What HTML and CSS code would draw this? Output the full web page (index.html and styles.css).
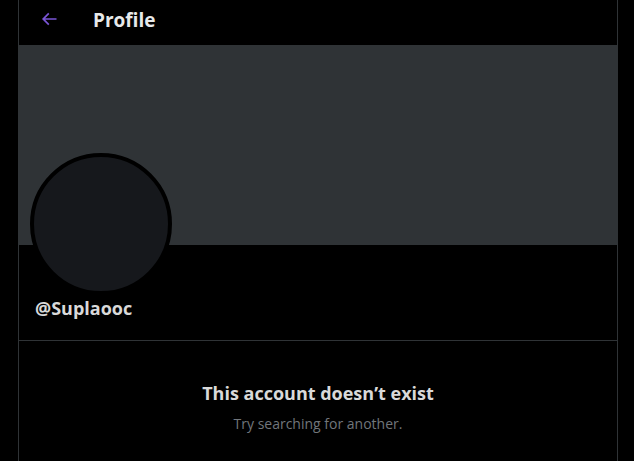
FILE: index.html
```html
<!DOCTYPE html>
<html>
<head>
<meta charset="utf-8">
<link rel="stylesheet" href="styles.css">
</head>
<body>
<div class="column">
  <header class="topbar">
    <span class="back">
      <svg width="20" height="20" viewBox="0 0 24 24"><path d="M7.414 13l5.043 5.04-1.414 1.42L3.586 12l7.457-7.46 1.414 1.42L7.414 11H21v2H7.414z" fill="#7a55d6"/></svg>
    </span>
    <h1 class="title">Profile</h1>
  </header>
  <div class="banner"></div>
  <div class="info">
    <div class="avatar"></div>
    <div class="handle">@Suplaooc</div>
  </div>
  <div class="empty">
    <div class="empty-title">This account doesn’t exist</div>
    <div class="empty-sub">Try searching for another.</div>
  </div>
</div>
</body>
</html>
```
FILE: styles.css
```css
html, body {
  margin: 0;
  padding: 0;
  background: #000;
  height: 100%;
  overflow: hidden;
}
body {
  font-family: "Open Sans", "Noto Sans", sans-serif;
  color: #e7e9ea;
}
.column {
  margin-left: 18px;
  width: 598px;
  min-height: 100%;
  border-left: 1px solid #2f3336;
  border-right: 1px solid #2f3336;
}
.topbar {
  height: 45px;
  display: flex;
  align-items: center;
}
.back {
  width: 20px;
  height: 20px;
  margin-left: 20px;
  margin-bottom: 7px;
  display: flex;
}
.title {
  margin: 0 0 5px 34px;
  font-size: 19px;
  font-weight: 700;
  color: #e7e9ea;
}
.banner {
  height: 200px;
  background: #2f3336;
}
.info {
  position: relative;
  height: 95px;
  border-bottom: 1px solid #2f3336;
}
.avatar {
  position: absolute;
  left: 11px;
  top: -92px;
  width: 134px;
  height: 134px;
  border-radius: 50%;
  background: #16181c;
  border: 4px solid #000;
}
.handle {
  position: absolute;
  left: 16px;
  top: 51px;
  font-size: 18px;
  font-weight: 700;
  color: #d9d9d9;
}
.empty {
  text-align: center;
  padding-top: 40px;
}
.empty-title {
  font-size: 18px;
  font-weight: 700;
  color: #d9d9d9;
}
.empty-sub {
  margin-top: 9px;
  font-size: 14px;
  color: #71767b;
}
```
